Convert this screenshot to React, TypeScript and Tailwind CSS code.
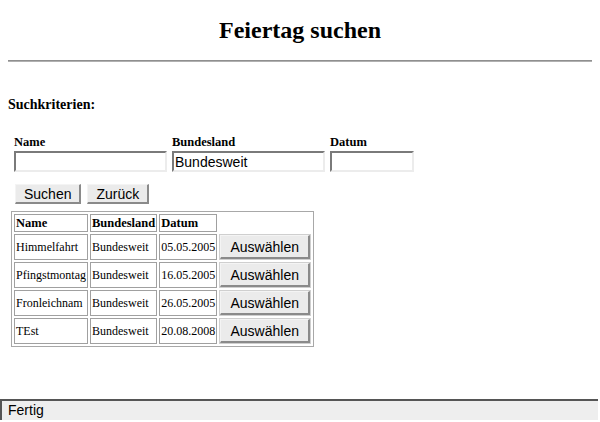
import React from "react";

const rows = [
  { name: "Himmelfahrt", land: "Bundesweit", datum: "05.05.2005" },
  { name: "Pfingstmontag", land: "Bundesweit", datum: "16.05.2005" },
  { name: "Fronleichnam", land: "Bundesweit", datum: "26.05.2005" },
  { name: "TEst", land: "Bundesweit", datum: "20.08.2008" },
];

const inputCls =
  "h-[21px] border-2 border-t-[#7a7a7a] border-l-[#7a7a7a] border-r-[#ececec] border-b-[#ececec] bg-white px-[1px] text-[14px] leading-[17px] text-black outline-none font-['Liberation_Sans',Arial,sans-serif]";

const btnCls =
  "h-[20px] bg-[#ebebeb] border border-t-[#f4f4f4] border-l-[#f4f4f4] border-r-2 border-b-2 border-r-[#8a8a8a] border-b-[#8a8a8a] px-[8px] text-[14px] leading-[16px] text-black font-['Liberation_Sans',Arial,sans-serif]";

export default function App() {
  return (
    <div className="flex min-h-[422px] flex-col bg-white text-black font-['Liberation_Serif','Times_New_Roman',serif]">
      <div className="px-2">
        {/* Title */}
        <h1 className="pt-4 text-center text-[24px] font-bold leading-[28px]">
          Feiertag suchen
        </h1>
        <div className="mt-4 h-[2px] border-t border-t-[#8f8f8f] border-b border-b-[#b0b0b0]" />

        <h2 className="mt-[35px] text-[14px] font-bold leading-[16px]">
          Suchkriterien:
        </h2>

        {/* Search form */}
        <div className="mt-[22px] ml-[6px] flex gap-[5px]">
          <div className="flex flex-col gap-[2px]">
            <label className="text-[12.5px] font-bold leading-[14px]">Name</label>
            <input className={`${inputCls} w-[153px]`} defaultValue="" />
          </div>
          <div className="flex flex-col gap-[2px]">
            <label className="text-[12.5px] font-bold leading-[14px]">Bundesland</label>
            <input className={`${inputCls} w-[153px]`} defaultValue="Bundesweit" />
          </div>
          <div className="flex flex-col gap-[2px]">
            <label className="text-[12.5px] font-bold leading-[14px]">Datum</label>
            <input className={`${inputCls} w-[84px]`} defaultValue="" />
          </div>
        </div>

        <div className="mt-[12px] ml-[7px] flex gap-[6px]">
          <button className={btnCls}>Suchen</button>
          <button className={btnCls}>Zurück</button>
        </div>

        {/* Results */}
        <table className="mt-[7px] ml-[3px] border-separate border-spacing-[2px] border border-[#a8a8a8] text-[12px] leading-[14px]">
          <thead>
            <tr>
              <th className="border border-[#a0a0a0] p-[1px] text-left text-[12.5px] font-bold">Name</th>
              <th className="border border-[#a0a0a0] p-[1px] text-left text-[12.5px] font-bold">Bundesland</th>
              <th className="border border-[#a0a0a0] p-[1px] text-left text-[12.5px] font-bold">Datum</th>
              <th className="p-[1px]" />
            </tr>
          </thead>
          <tbody>
            {rows.map((r) => (
              <tr key={r.name}>
                <td className="border border-[#a0a0a0] p-[1px] whitespace-nowrap">{r.name}</td>
                <td className="border border-[#a0a0a0] p-[1px] whitespace-nowrap">{r.land}</td>
                <td className="border border-[#a0a0a0] p-[1px] whitespace-nowrap">{r.datum}</td>
                <td className="border border-[#cfcfcf] p-0">
                  <button className="h-[24px] w-[90px] bg-[#ebebeb] border border-t-[#f4f4f4] border-l-[#f4f4f4] border-r-2 border-b-2 border-r-[#8a8a8a] border-b-[#8a8a8a] text-[14px] leading-[16px] font-['Liberation_Sans',Arial,sans-serif]">
                    Auswählen
                  </button>
                </td>
              </tr>
            ))}
          </tbody>
        </table>
      </div>

      {/* Status bar */}
      <div className="mt-auto mb-[2px] mr-[2px] border-t-2 border-l-2 border-[#555555] bg-[#eeeeee] pl-[6px] text-[14px] leading-[19px] font-['Liberation_Sans',Arial,sans-serif]">
        Fertig
      </div>
    </div>
  );
}
